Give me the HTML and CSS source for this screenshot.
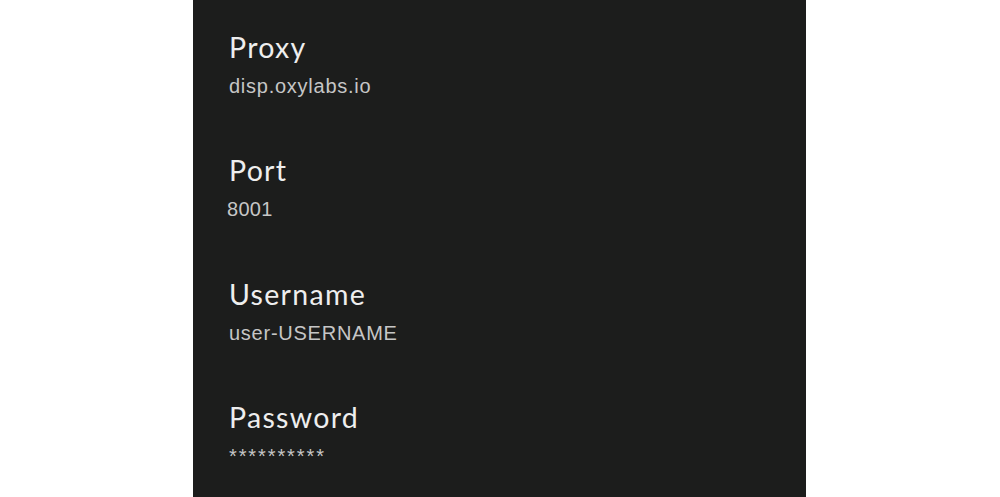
FILE: index.html
```html
<!DOCTYPE html>
<html lang="en">
<head>
<meta charset="utf-8">
<title>Proxy settings</title>
<link rel="stylesheet" href="styles.css">
</head>
<body>
<main class="panel">
  <section class="field">
    <div class="label">Proxy</div>
    <div class="value">disp.oxylabs.io</div>
  </section>
  <section class="field">
    <div class="label">Port</div>
    <div class="value value-num">8001</div>
  </section>
  <section class="field">
    <div class="label">Username</div>
    <div class="value">user-USERNAME</div>
  </section>
  <section class="field">
    <div class="label">Password</div>
    <div class="value value-secret">**********</div>
  </section>
</main>
</body>
</html>
```

FILE: styles.css
```css
html, body {
  margin: 0;
  padding: 0;
  background: #ffffff;
}

.panel {
  box-sizing: border-box;
  width: 613px;
  height: 497px;
  margin-left: 193px;
  padding: 30px 36px 0;
  background: #1c1d1c;
  overflow: hidden;
}

.field {
  margin-bottom: 55.3px;
}

.label {
  font-family: Lato, "Open Sans", sans-serif;
  font-size: 28.5px;
  line-height: 34px;
  letter-spacing: 1.3px;
  color: #eeeeee;
}

.value {
  margin-top: 10px;
  font-family: "Liberation Sans", Arial, sans-serif;
  font-size: 20px;
  line-height: 24px;
  letter-spacing: 0.75px;
  color: #c6c6c6;
}

.value-num {
  margin-left: -2px;
  letter-spacing: 0.3px;
}

.value-secret {
  margin-top: 10px;
  letter-spacing: 1.9px;
}
```
